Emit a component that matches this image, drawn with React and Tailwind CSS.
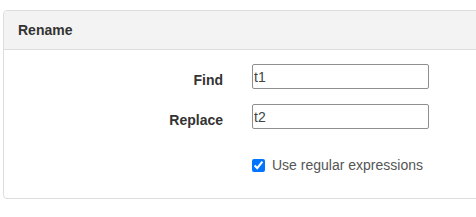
import React from "react";

export default function App() {
  return (
    <div className="w-[476px] h-[217px] overflow-hidden bg-white pt-[10px] pl-[3px]" style={{ fontFamily: '"Liberation Sans", Arial, sans-serif' }}>
      <div className="w-[500px] border border-[#dddddd] rounded-[4px] bg-white">
        <div className="h-[39px] bg-[#f3f3f3] border-b border-[#dddddd] rounded-t-[4px] flex items-center pl-[14px]">
          <span className="text-[14px] leading-[16px] font-bold text-[#333333]">Rename</span>
        </div>
        <div className="h-[148px] pt-[14px]">
          <div className="flex items-start h-[25px]">
            <label className="w-[219px] mt-[8px] text-right text-[14px] leading-[16px] font-bold text-[#333333]">Find</label>
            <input defaultValue="t1" className="ml-[29px] w-[177px] h-[25px] border border-[#8f8f8f] rounded-[2px] px-[1px] text-[14px] text-[#444444] outline-none" />
          </div>
          <div className="flex items-start h-[25px] mt-[15px]">
            <label className="w-[219px] mt-[8px] text-right text-[14px] leading-[16px] font-bold text-[#333333]">Replace</label>
            <input defaultValue="t2" className="ml-[29px] w-[177px] h-[25px] border border-[#8f8f8f] rounded-[2px] px-[1px] text-[14px] text-[#444444] outline-none" />
          </div>
          <div className="flex items-center mt-[26px] pl-[248px]">
            <input type="checkbox" defaultChecked className="w-[13px] h-[13px] m-0" />
            <span className="ml-[7px] text-[14px] text-[#555555]">Use regular expressions</span>
          </div>
        </div>
      </div>
    </div>
  );
}
